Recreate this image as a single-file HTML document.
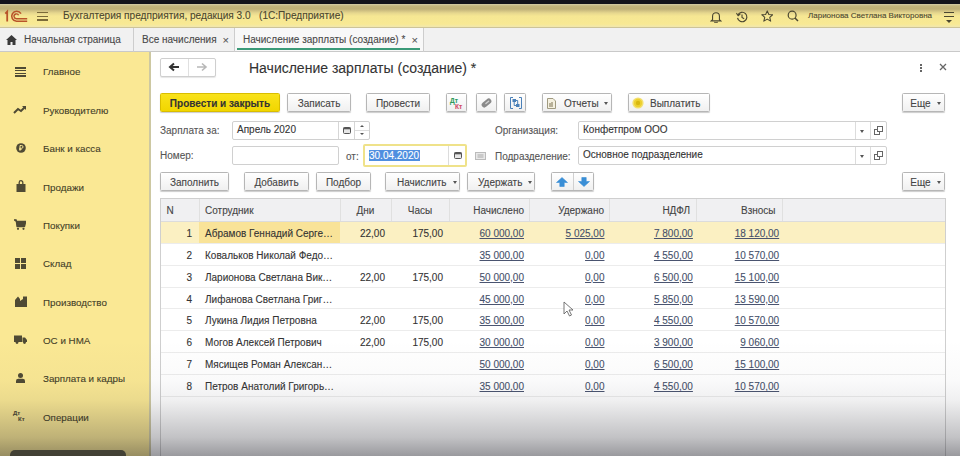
<!DOCTYPE html>
<html><head><meta charset="utf-8">
<style>
*{box-sizing:border-box;margin:0;padding:0}
html,body{width:960px;height:456px;overflow:hidden;background:#fff;font-family:"Liberation Sans",sans-serif;color:#404040;position:relative;-webkit-text-stroke-width:0.1px}
.a{position:absolute;white-space:nowrap}
#topblk{left:0;top:0;width:960px;height:4px;background:#13131c}
#hdr{left:0;top:4px;width:960px;height:24px;background:linear-gradient(#d4cca8 0px,#c2b47c 2px,#bfb078 5px,#e6d78e 9px,#f6e793 12px,#f8e994 20px,#f4e9a6 22px,#efe5b0 23px);border-bottom:1px solid #cdc498}
#tabs{left:0;top:28px;width:960px;height:24px;background:#f1f1f1;border-bottom:1px solid #c9c9c9}
#side{left:0;top:52px;width:151px;height:404px;background:#fae894;border-right:2px solid #cdc8a2}
.tab{top:28px;height:24px;font-size:10px;line-height:24.5px;color:#484848}
.nav{font-size:9.8px;color:#433e28;line-height:12px;-webkit-text-stroke:0.1px #433e28}
.btn{height:19px;border:1px solid #b6b6b6;border-radius:1.5px;background:linear-gradient(#ffffff,#f0f0f0);box-shadow:0 1px 1px rgba(0,0,0,.2);font-size:10px;line-height:19px;text-align:center;color:#444}
.inp{height:19px;border:1px solid #d0d0d0;border-radius:2px;background:#fff;font-size:10px;line-height:16.5px;color:#333;padding-left:4px}
.lbl{font-size:10px;color:#555;line-height:12px}
.hc{font-size:10px;color:#444;line-height:12px}
.cell{font-size:10px;color:#333;line-height:12px}
.lnk{font-size:10px;color:#45506a;line-height:12px;text-decoration:underline;text-decoration-color:#4a5470}
.dd{display:inline-block;width:0;height:0;border-left:2.5px solid transparent;border-right:2.5px solid transparent;border-top:3px solid #555;vertical-align:middle;margin-left:6px;position:relative;top:-1px}
</style></head><body>
<div class="a" id="topblk"></div>
<div class="a" id="hdr"></div>
<div class="a" id="tabs"></div>
<div class="a" id="side"></div>

<svg class="a" style="left:0;top:0" width="30" height="28" viewBox="0 0 30 28"><path d="M5.3 13.6 L7.2 11.6 V21.5" stroke="#b8542a" stroke-width="1.8" fill="none"/><path d="M21 13.6 A5 5 0 1 0 16.5 21.2 H27.2" stroke="#b8542a" stroke-width="1.6" fill="none"/><path d="M18.6 15.3 A2.4 2.4 0 1 0 16.5 18.7 H27.2" stroke="#b8542a" stroke-width="1.4" fill="none"/></svg>
<div class="a" style="left:37px;top:11.6px;width:11px;height:1.3px;background:#7a6a3a"></div>
<div class="a" style="left:37px;top:15.5px;width:11px;height:1.3px;background:#7a6a3a"></div>
<div class="a" style="left:37px;top:19.4px;width:11px;height:1.3px;background:#7a6a3a"></div>
<div class="a" style="left:63px;top:10px;font-size:10.1px;line-height:12px;color:#4a4630">Бухгалтерия предприятия, редакция 3.0&nbsp;&nbsp;&nbsp;(1С:Предприятие)</div>
<svg class="a" style="left:710px;top:10.5px" width="12" height="12" viewBox="0 0 14 14"><path d="M3 10 V6 A4 4 0 0 1 11 6 V10 L12.5 11.5 H1.5Z" stroke="#4a4630" stroke-width="1.3" fill="none"/><path d="M5.5 12.5 A1.5 1.5 0 0 0 8.5 12.5" stroke="#4a4630" stroke-width="1.2" fill="none"/></svg>
<svg class="a" style="left:736px;top:10.5px" width="12" height="12" viewBox="0 0 14 14"><path d="M2.3 4.5 A5.5 5.5 0 1 1 1.8 8" stroke="#4a4630" stroke-width="1.4" fill="none"/><path d="M0.5 2.5 L2.5 5.5 L5 3.5" stroke="#4a4630" stroke-width="1.2" fill="none"/><path d="M7 4 V7.5 L9.5 9" stroke="#4a4630" stroke-width="1.3" fill="none"/></svg>
<svg class="a" style="left:760.5px;top:10px" width="12.5" height="12.5" viewBox="0 0 14 14"><path d="M7 1 L8.8 5 L13 5.3 L9.8 8.2 L10.8 12.5 L7 10.2 L3.2 12.5 L4.2 8.2 L1 5.3 L5.2 5Z" stroke="#4a4630" stroke-width="1.2" fill="none" stroke-linejoin="round"/></svg>
<svg class="a" style="left:787px;top:10px" width="12" height="12" viewBox="0 0 14 14"><circle cx="6" cy="6" r="4.6" stroke="#4a4630" stroke-width="1.4" fill="none"/><path d="M9.3 9.3 L12.8 12.8" stroke="#4a4630" stroke-width="1.8"/></svg>
<div class="a" style="left:808px;top:11px;font-size:8px;line-height:10px;color:#4a4630">Ларионова Светлана Викторовна</div>
<div class="a" style="left:943.5px;top:12.0px;width:10px;height:1.4px;background:#4a4630"></div>
<div class="a" style="left:943.5px;top:15.7px;width:10px;height:1.4px;background:#4a4630"></div>
<div class="a" style="left:945.5px;top:19.5px;width:0;height:0;border-left:3px solid transparent;border-right:3px solid transparent;border-top:3px solid #4a4630"></div>
<svg class="a" style="left:6px;top:35px" width="11" height="10" viewBox="0 0 11 10"><path d="M5.5 0 L11 5 H9.5 V10 H6.5 V7 H4.5 V10 H1.5 V5 H0Z" fill="#3a3a3a"/></svg>
<div class="a tab" style="left:24px">Начальная страница</div>
<div class="a" style="left:133px;top:28px;width:1px;height:24px;background:#cdcdcd"></div>
<div class="a tab" style="left:142px">Все начисления</div>
<div class="a tab" style="left:222.5px;font-size:11px;color:#555">×</div>
<div class="a" style="left:234px;top:28px;width:1px;height:24px;background:#cdcdcd"></div>
<div class="a" style="left:235px;top:28px;width:188px;height:23px;background:#f8f8f8"></div>
<div class="a tab" style="left:243px">Начисление зарплаты (создание) *</div>
<div class="a tab" style="left:411.5px;font-size:11px;color:#555">×</div>
<div class="a" style="left:237px;top:48px;width:183px;height:2px;background:#3b9a78"></div>
<div class="a" style="left:423px;top:28px;width:1px;height:24px;background:#cdcdcd"></div>
<div class="a" style="left:15px;top:66.9px;width:11px;height:1.8px;background:#4f4a34"></div><div class="a" style="left:15px;top:69.7px;width:11px;height:1.8px;background:#4f4a34"></div><div class="a" style="left:15px;top:72.5px;width:11px;height:1.8px;background:#4f4a34"></div><div class="a" style="left:15px;top:75.3px;width:11px;height:1.8px;background:#4f4a34"></div>
<div class="a nav" style="left:43px;top:66.4px">Главное</div>
<svg class="a" style="left:13px;top:104.76px" width="14" height="10" viewBox="0 0 14 10"><path d="M1 8 L5 4 L8 6 L12 2" stroke="#4f4a34" stroke-width="2" fill="none"/><path d="M9 1 L13 1 L13 5Z" fill="#4f4a34"/></svg>
<div class="a nav" style="left:43px;top:104.8px">Руководителю</div>
<svg class="a" style="left:15.5px;top:143.12px" width="10" height="10" viewBox="0 0 10 10"><circle cx="5" cy="5" r="4.8" fill="#4f4a34"/><path d="M4 7.8 V2.5 H5.6 A1.4 1.4 0 0 1 5.6 5.3 H3.2 M3.2 6.4 H5.6" stroke="#fae894" stroke-width="1" fill="none"/></svg>
<div class="a nav" style="left:43px;top:143.1px">Банк и касса</div>
<svg class="a" style="left:15.5px;top:180.48000000000002px" width="10" height="12" viewBox="0 0 10 12"><path d="M3.2 4 V2.5 A1.8 1.8 0 0 1 6.8 2.5 V4" stroke="#4f4a34" stroke-width="1.3" fill="none"/><rect x="0.5" y="4" width="9" height="8" fill="#4f4a34"/></svg>
<div class="a nav" style="left:43px;top:181.5px">Продажи</div>
<svg class="a" style="left:14px;top:219.34px" width="12" height="11" viewBox="0 0 12 11"><path d="M0 0.8 H2.2 L3 7.5 H10.5 L11.8 2.5 H2.5Z" stroke="#4f4a34" stroke-width="1.3" fill="#4f4a34" stroke-linejoin="round"/><circle cx="4" cy="9.8" r="1.1" fill="#4f4a34"/><circle cx="9.5" cy="9.8" r="1.1" fill="#4f4a34"/></svg>
<div class="a nav" style="left:43px;top:219.8px">Покупки</div>
<svg class="a" style="left:14.5px;top:257.70000000000005px" width="11" height="11" viewBox="0 0 11 11"><rect x="0" y="0" width="5" height="5" fill="#4f4a34"/><rect x="6" y="0" width="5" height="5" fill="#4f4a34"/><rect x="0" y="6" width="5" height="5" fill="#4f4a34"/><rect x="6" y="6" width="5" height="5" fill="#4f4a34"/></svg>
<div class="a nav" style="left:43px;top:258.2px">Склад</div>
<svg class="a" style="left:15px;top:296.06px" width="12" height="11" viewBox="0 0 12 11"><path d="M0 11 V4 L3 0.5 L5 3 V5 L8 3 V0.5 H12 V11Z" fill="#4f4a34"/></svg>
<div class="a nav" style="left:43px;top:296.6px">Производство</div>
<svg class="a" style="left:14px;top:335.41999999999996px" width="13" height="9" viewBox="0 0 13 9"><path d="M0 0.5 H8 V7 H0Z M8.5 2.5 H11 L13 5 V7 H8.5Z" fill="#4f4a34"/><circle cx="3" cy="7.5" r="1.4" fill="#4f4a34"/><circle cx="10.5" cy="7.5" r="1.4" fill="#4f4a34"/></svg>
<div class="a nav" style="left:43px;top:334.9px">ОС и НМА</div>
<svg class="a" style="left:16px;top:373.28px" width="9" height="10" viewBox="0 0 9 10"><circle cx="4.5" cy="2.6" r="2.5" fill="#4f4a34"/><path d="M0 10 V7.8 Q0 5.8 2.3 5.8 H6.7 Q9 5.8 9 7.8 V10Z" fill="#4f4a34"/></svg>
<div class="a nav" style="left:43px;top:373.3px">Зарплата и кадры</div>
<div class="a" style="left:13px;top:410.14px;font-size:6px;font-weight:bold;color:#4f4a34;line-height:6px">Дт<br>&nbsp;&nbsp;&nbsp;Кт</div>
<div class="a nav" style="left:43px;top:411.6px">Операции</div>
<div class="a" style="left:160px;top:58px;width:56px;height:19px;border:1px solid #cfcfcf;border-radius:2px;background:#fff;box-shadow:0 1px 1px rgba(0,0,0,.1)"></div>
<div class="a" style="left:188px;top:59px;width:1px;height:17px;background:#e0e0e0"></div>
<svg class="a" style="left:168px;top:62px" width="12" height="10" viewBox="0 0 12 10"><path d="M11 5 H3 M6 1.5 L2 5 L6 8.5" stroke="#333" stroke-width="2" fill="none"/></svg>
<svg class="a" style="left:196px;top:62px" width="12" height="10" viewBox="0 0 12 10"><path d="M1 5 H9 M6 1.5 L10 5 L6 8.5" stroke="#b8b8b8" stroke-width="1.6" fill="none"/></svg>
<div class="a" style="left:249px;top:60px;font-size:14px;line-height:17px;color:#333">Начисление зарплаты (создание) *</div>
<div class="a" style="left:920px;top:64px;width:2px;height:2px;background:#666;box-shadow:0 3px 0 #666,0 6px 0 #666"></div>
<svg class="a" style="left:939px;top:63px" width="8" height="8" viewBox="0 0 8 8"><path d="M1 1 L7 7 M7 1 L1 7" stroke="#666" stroke-width="1.3"/></svg>
<div class="a btn" style="left:160px;top:93px;width:120px;background:linear-gradient(#f9e21a,#f1d600);border-color:#d9bd00;font-weight:bold;color:#333">Провести и закрыть</div>
<div class="a btn" style="left:287px;top:93px;width:64px">Записать</div>
<div class="a btn" style="left:366px;top:93px;width:64px">Провести</div>
<div class="a btn" style="left:446px;top:93px;width:21px"></div>
<div class="a" style="left:450px;top:97px;font-size:6.5px;line-height:7px;font-weight:bold;color:#2f9a5c">Дт</div><div class="a" style="left:455px;top:104px;font-size:6.5px;line-height:6px;font-weight:bold;color:#d24a68">Кт</div>
<div class="a btn" style="left:476px;top:93px;width:21px"></div>
<svg class="a" style="left:479px;top:96px" width="15" height="14" viewBox="0 0 15 14"><g transform="rotate(-40 7.5 7)"><rect x="2" y="4.3" width="11" height="5.4" rx="2.7" fill="#8a8a8a"/><rect x="6" y="6.3" width="5" height="1.4" rx="0.7" fill="#cfcfcf"/></g></svg>
<div class="a btn" style="left:504px;top:93px;width:22px"></div>
<svg class="a" style="left:510px;top:97px" width="12" height="12" viewBox="0 0 12 12"><path d="M3 0.5 H0.5 V11.5 H3 M9 0.5 H11.5 V11.5 H9" stroke="#4a80b8" stroke-width="1" fill="none"/><rect x="2.5" y="2" width="3.5" height="3" fill="#4a80b8"/><rect x="6" y="7" width="3.5" height="3" fill="#4a80b8"/><path d="M4.2 5 V8.5 H6 M7.7 7 V3.5 H6" stroke="#4a80b8" stroke-width="1" fill="none"/></svg>
<div class="a btn" style="left:542px;top:93px;width:70px;text-align:left;padding-left:21px;line-height:20px">Отчеты<span class="dd" style="margin-left:5px"></span></div>
<svg class="a" style="left:547px;top:97.5px" width="9" height="11" viewBox="0 0 9 11"><path d="M0.5 0.5 H6 L8.5 3 V10.5 H0.5Z" fill="#f4f0e0" stroke="#a09a80"/><rect x="2.5" y="5" width="1" height="4" fill="#7a7050"/><rect x="4.5" y="4" width="1" height="5" fill="#7a7050"/></svg>
<div class="a btn" style="left:628px;top:93px;width:82px;text-align:left;padding-left:21px">Выплатить</div>
<svg class="a" style="left:632px;top:96.5px" width="12" height="12" viewBox="0 0 12 12"><circle cx="6" cy="6" r="5.6" fill="#f3e070"/><circle cx="6" cy="6" r="4.2" fill="#ecd030"/><circle cx="6" cy="6" r="2.2" fill="#d8b810"/></svg>
<div class="a btn" style="left:902px;top:93px;width:43px;padding-left:4px">Еще<span class="dd" style="margin-left:6px"></span></div>
<div class="a lbl" style="left:160px;top:124.5px">Зарплата за:</div>
<div class="a inp" style="left:232px;top:121px;width:138px">Апрель 2020</div>
<div class="a" style="left:338px;top:122px;width:1px;height:17px;background:#d6d6d6"></div>
<div class="a" style="left:354px;top:122px;width:1px;height:17px;background:#d6d6d6"></div>
<div class="a" style="left:355px;top:130px;width:14px;height:1px;background:#dcdcdc"></div>
<svg class="a" style="left:343px;top:127px" width="8" height="7" viewBox="0 0 8 7"><rect x="0.5" y="0.5" width="7" height="6" rx="1" fill="#e6e6e6" stroke="#555"/><rect x="0.5" y="0.5" width="7" height="1.8" fill="#555"/></svg>
<div class="a" style="left:359.5px;top:124.5px;width:0;height:0;border-left:2px solid transparent;border-right:2px solid transparent;border-bottom:2px solid #555"></div>
<div class="a" style="left:359.5px;top:133px;width:0;height:0;border-left:2px solid transparent;border-right:2px solid transparent;border-top:2px solid #555"></div>
<div class="a lbl" style="left:160px;top:150px">Номер:</div>
<div class="a inp" style="left:232px;top:146px;width:107px"></div>
<div class="a lbl" style="left:346px;top:150.5px;color:#555">от:</div>
<div class="a" style="left:363px;top:144px;width:104px;height:23px;border:2px solid #efe28a;border-radius:2px;background:#fff"></div>
<div class="a" style="left:369px;top:150px;width:51px;height:11px;background:#4f8fe0"></div>
<div class="a" style="left:369px;top:149.5px;font-size:10px;line-height:12px;color:#fff">30.04.2020</div>
<div class="a" style="left:448px;top:146px;width:1px;height:19px;background:#dcdcdc"></div>
<svg class="a" style="left:454px;top:152px" width="8" height="7" viewBox="0 0 8 7"><rect x="0.5" y="0.5" width="7" height="6" rx="1" fill="#e6e6e6" stroke="#555"/><rect x="0.5" y="0.5" width="7" height="1.8" fill="#555"/></svg>
<div class="a lbl" style="left:495px;top:124.5px">Организация:</div>
<div class="a inp" style="left:578px;top:121px;width:309px">Конфетпром ООО</div>
<div class="a lbl" style="left:495px;top:150.5px">Подразделение:</div>
<div class="a inp" style="left:578px;top:146px;width:309px">Основное подразделение</div>
<div class="a" style="left:855px;top:122px;width:1px;height:17px;background:#dcdcdc"></div>
<div class="a" style="left:870px;top:122px;width:1px;height:17px;background:#dcdcdc"></div>
<div class="a" style="left:860px;top:130px;width:0;height:0;border-left:2.5px solid transparent;border-right:2.5px solid transparent;border-top:3px solid #555"></div>
<svg class="a" style="left:874px;top:126px" width="9" height="9" viewBox="0 0 9 9"><rect x="0.5" y="3.5" width="5" height="5" fill="none" stroke="#666"/><rect x="3.5" y="0.5" width="5" height="5" fill="#fff" stroke="#666"/></svg>
<div class="a" style="left:855px;top:147px;width:1px;height:17px;background:#dcdcdc"></div>
<div class="a" style="left:870px;top:147px;width:1px;height:17px;background:#dcdcdc"></div>
<div class="a" style="left:860px;top:155px;width:0;height:0;border-left:2.5px solid transparent;border-right:2.5px solid transparent;border-top:3px solid #555"></div>
<svg class="a" style="left:874px;top:151px" width="9" height="9" viewBox="0 0 9 9"><rect x="0.5" y="3.5" width="5" height="5" fill="none" stroke="#666"/><rect x="3.5" y="0.5" width="5" height="5" fill="#fff" stroke="#666"/></svg>
<svg class="a" style="left:475px;top:152px" width="11" height="8" viewBox="0 0 11 8"><rect x="0.5" y="0.5" width="10" height="7" fill="#e8e8e8" stroke="#bbb"/><path d="M2.5 3 H8.5 M2.5 5 H8.5" stroke="#aaa"/></svg>
<div class="a btn" style="left:160px;top:172px;width:69px">Заполнить</div>
<div class="a btn" style="left:244px;top:172px;width:65px">Добавить</div>
<div class="a btn" style="left:316px;top:172px;width:55px">Подбор</div>
<div class="a btn" style="left:385px;top:172px;width:75px;text-align:left;padding-left:11px">Начислить<span class="dd"></span></div>
<div class="a btn" style="left:467px;top:172px;width:68px;text-align:left;padding-left:10px">Удержать<span class="dd"></span></div>
<div class="a btn" style="left:551px;top:172px;width:43px"></div>
<div class="a" style="left:573px;top:173px;width:1px;height:17px;background:#d0d0d0"></div>
<svg class="a" style="left:556px;top:177px" width="12" height="10" viewBox="0 0 12 10"><path d="M6 0.5 L11.5 5.5 H8.2 V9.5 H3.8 V5.5 H0.5Z" fill="#3a8fd6" stroke="#3a8fd6" stroke-width="0.6" stroke-linejoin="round"/></svg>
<svg class="a" style="left:578px;top:176.5px" width="12" height="10" viewBox="0 0 12 10"><path d="M6 9.5 L11.5 4.5 H8.2 V0.5 H3.8 V4.5 H0.5Z" fill="#3a8fd6" stroke="#3a8fd6" stroke-width="0.6" stroke-linejoin="round"/></svg>
<div class="a btn" style="left:902px;top:172px;width:43px;padding-left:4px">Еще<span class="dd" style="margin-left:6px"></span></div>
<div class="a" style="left:160px;top:198px;width:786px;height:258px;border:1px solid #cfcfcf;border-bottom:none;background:#fff"></div>
<div class="a" style="left:161px;top:199px;width:621px;height:23px;background:#f0f0f2"></div>
<div class="a" style="left:782px;top:199px;width:163px;height:23px;background:#f0f0f2"></div>
<div class="a" style="left:161px;top:221px;width:784px;height:1px;background:#dcdcdc"></div>
<div class="a" style="left:199px;top:199px;width:1px;height:22px;background:#e0e0e0"></div>
<div class="a" style="left:340px;top:199px;width:1px;height:22px;background:#e0e0e0"></div>
<div class="a" style="left:391px;top:199px;width:1px;height:22px;background:#e0e0e0"></div>
<div class="a" style="left:449px;top:199px;width:1px;height:22px;background:#e0e0e0"></div>
<div class="a" style="left:529px;top:199px;width:1px;height:22px;background:#e0e0e0"></div>
<div class="a" style="left:609px;top:199px;width:1px;height:22px;background:#e0e0e0"></div>
<div class="a" style="left:696px;top:199px;width:1px;height:22px;background:#e0e0e0"></div>
<div class="a" style="left:782px;top:199px;width:1px;height:22px;background:#e0e0e0"></div>
<div class="a hc" style="left:166.5px;top:205px">N</div>
<div class="a hc" style="left:205px;top:205px">Сотрудник</div>
<div class="a hc" style="left:340px;top:205px;width:51px;text-align:center">Дни</div>
<div class="a hc" style="left:391px;top:205px;width:58px;text-align:center">Часы</div>
<div class="a hc" style="left:449px;top:205px;width:75px;text-align:right">Начислено</div>
<div class="a hc" style="left:529px;top:205px;width:75px;text-align:right">Удержано</div>
<div class="a hc" style="left:609px;top:205px;width:81px;text-align:right">НДФЛ</div>
<div class="a hc" style="left:696px;top:205px;width:79.5px;text-align:right">Взносы</div>
<div class="a" style="left:161px;top:222.0px;width:784px;height:21.9px;background:#fbf0c2"></div>
<div class="a" style="left:199px;top:222.0px;width:141px;height:21.9px;background:#f9e398"></div>
<div class="a" style="left:161px;top:242.8px;width:784px;height:1px;background:#ececec"></div>
<div class="a cell" style="left:160px;top:227.9px;width:32px;text-align:right">1</div>
<div class="a cell" style="left:205px;top:227.9px">Абрамов Геннадий Серге…</div>
<div class="a cell" style="left:340px;top:227.9px;width:45px;text-align:right">22,00</div>
<div class="a cell" style="left:391px;top:227.9px;width:52px;text-align:right">175,00</div>
<div class="a lnk" style="left:449px;top:227.9px;width:75px;text-align:right">60 000,00</div>
<div class="a lnk" style="left:529px;top:227.9px;width:75.5px;text-align:right">5 025,00</div>
<div class="a lnk" style="left:609px;top:227.9px;width:83.89999999999998px;text-align:right">7 800,00</div>
<div class="a lnk" style="left:696px;top:227.9px;width:83.20000000000005px;text-align:right">18 120,00</div>
<div class="a" style="left:161px;top:264.7px;width:784px;height:1px;background:#ececec"></div>
<div class="a cell" style="left:160px;top:249.8px;width:32px;text-align:right">2</div>
<div class="a cell" style="left:205px;top:249.8px">Ковальков Николай Федо…</div>
<div class="a lnk" style="left:449px;top:249.8px;width:75px;text-align:right">35 000,00</div>
<div class="a lnk" style="left:529px;top:249.8px;width:75.5px;text-align:right">0,00</div>
<div class="a lnk" style="left:609px;top:249.8px;width:83.89999999999998px;text-align:right">4 550,00</div>
<div class="a lnk" style="left:696px;top:249.8px;width:83.20000000000005px;text-align:right">10 570,00</div>
<div class="a" style="left:161px;top:286.6px;width:784px;height:1px;background:#ececec"></div>
<div class="a cell" style="left:160px;top:271.6px;width:32px;text-align:right">3</div>
<div class="a cell" style="left:205px;top:271.6px">Ларионова Светлана Вик…</div>
<div class="a cell" style="left:340px;top:271.6px;width:45px;text-align:right">22,00</div>
<div class="a cell" style="left:391px;top:271.6px;width:52px;text-align:right">175,00</div>
<div class="a lnk" style="left:449px;top:271.6px;width:75px;text-align:right">50 000,00</div>
<div class="a lnk" style="left:529px;top:271.6px;width:75.5px;text-align:right">0,00</div>
<div class="a lnk" style="left:609px;top:271.6px;width:83.89999999999998px;text-align:right">6 500,00</div>
<div class="a lnk" style="left:696px;top:271.6px;width:83.20000000000005px;text-align:right">15 100,00</div>
<div class="a" style="left:161px;top:308.4px;width:784px;height:1px;background:#ececec"></div>
<div class="a cell" style="left:160px;top:293.5px;width:32px;text-align:right">4</div>
<div class="a cell" style="left:205px;top:293.5px">Лифанова Светлана Григ…</div>
<div class="a lnk" style="left:449px;top:293.5px;width:75px;text-align:right">45 000,00</div>
<div class="a lnk" style="left:529px;top:293.5px;width:75.5px;text-align:right">0,00</div>
<div class="a lnk" style="left:609px;top:293.5px;width:83.89999999999998px;text-align:right">5 850,00</div>
<div class="a lnk" style="left:696px;top:293.5px;width:83.20000000000005px;text-align:right">13 590,00</div>
<div class="a" style="left:161px;top:330.2px;width:784px;height:1px;background:#ececec"></div>
<div class="a cell" style="left:160px;top:315.3px;width:32px;text-align:right">5</div>
<div class="a cell" style="left:205px;top:315.3px">Лукина Лидия Петровна</div>
<div class="a cell" style="left:340px;top:315.3px;width:45px;text-align:right">22,00</div>
<div class="a cell" style="left:391px;top:315.3px;width:52px;text-align:right">175,00</div>
<div class="a lnk" style="left:449px;top:315.3px;width:75px;text-align:right">35 000,00</div>
<div class="a lnk" style="left:529px;top:315.3px;width:75.5px;text-align:right">0,00</div>
<div class="a lnk" style="left:609px;top:315.3px;width:83.89999999999998px;text-align:right">4 550,00</div>
<div class="a lnk" style="left:696px;top:315.3px;width:83.20000000000005px;text-align:right">10 570,00</div>
<div class="a" style="left:161px;top:352.1px;width:784px;height:1px;background:#ececec"></div>
<div class="a cell" style="left:160px;top:337.2px;width:32px;text-align:right">6</div>
<div class="a cell" style="left:205px;top:337.2px">Могов Алексей Петрович</div>
<div class="a cell" style="left:340px;top:337.2px;width:45px;text-align:right">22,00</div>
<div class="a cell" style="left:391px;top:337.2px;width:52px;text-align:right">175,00</div>
<div class="a lnk" style="left:449px;top:337.2px;width:75px;text-align:right">30 000,00</div>
<div class="a lnk" style="left:529px;top:337.2px;width:75.5px;text-align:right">0,00</div>
<div class="a lnk" style="left:609px;top:337.2px;width:83.89999999999998px;text-align:right">3 900,00</div>
<div class="a lnk" style="left:696px;top:337.2px;width:83.20000000000005px;text-align:right">9 060,00</div>
<div class="a" style="left:161px;top:374.0px;width:784px;height:1px;background:#ececec"></div>
<div class="a cell" style="left:160px;top:359.0px;width:32px;text-align:right">7</div>
<div class="a cell" style="left:205px;top:359.0px">Мясищев Роман Алексан…</div>
<div class="a lnk" style="left:449px;top:359.0px;width:75px;text-align:right">50 000,00</div>
<div class="a lnk" style="left:529px;top:359.0px;width:75.5px;text-align:right">0,00</div>
<div class="a lnk" style="left:609px;top:359.0px;width:83.89999999999998px;text-align:right">6 500,00</div>
<div class="a lnk" style="left:696px;top:359.0px;width:83.20000000000005px;text-align:right">15 100,00</div>
<div class="a" style="left:161px;top:395.8px;width:784px;height:1px;background:#ececec"></div>
<div class="a cell" style="left:160px;top:380.9px;width:32px;text-align:right">8</div>
<div class="a cell" style="left:205px;top:380.9px">Петров Анатолий Григорь…</div>
<div class="a lnk" style="left:449px;top:380.9px;width:75px;text-align:right">35 000,00</div>
<div class="a lnk" style="left:529px;top:380.9px;width:75.5px;text-align:right">0,00</div>
<div class="a lnk" style="left:609px;top:380.9px;width:83.89999999999998px;text-align:right">4 550,00</div>
<div class="a lnk" style="left:696px;top:380.9px;width:83.20000000000005px;text-align:right">10 570,00</div>
<svg class="a" style="left:563px;top:301px" width="11" height="16" viewBox="0 0 11 16"><path d="M1 1 V13 L4 10 L6.5 15 L8.5 14 L6 9 H10Z" fill="#fff" stroke="#666" stroke-width="0.9"/></svg>
<div class="a" style="left:0;top:340px;width:960px;height:116px;background:linear-gradient(rgba(40,40,50,0) 0%,rgba(40,40,50,.025) 35%,rgba(40,40,50,.07) 52%,rgba(30,30,40,.27) 84%,rgba(20,20,30,.43) 100%)"></div>
<div class="a" style="left:10px;top:450px;width:116px;height:12px;border-radius:5px;background:rgba(50,50,45,.85)"></div>
</body></html>
